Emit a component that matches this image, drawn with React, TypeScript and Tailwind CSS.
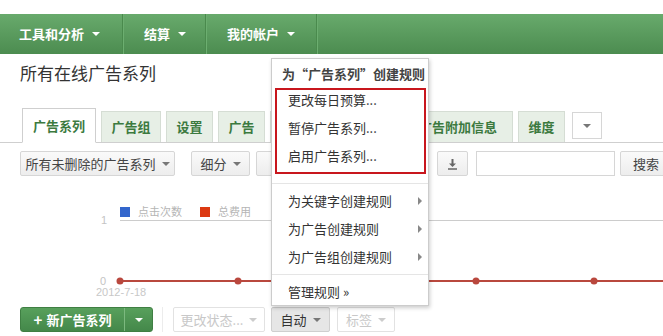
const font = { fontFamily: '"Noto Sans CJK SC", "Liberation Sans", sans-serif' }

const Caret = ({ className = 'text-[#777]' }: { className?: string }) => (
  <span
    className={`inline-block w-0 h-0 border-l-[4px] border-r-[4px] border-t-[4px] border-l-transparent border-r-transparent border-t-current ${className}`}
  />
)

const Arrow = () => (
  <span className="inline-block w-0 h-0 border-t-[4px] border-b-[4px] border-l-[4px] border-t-transparent border-b-transparent border-l-[#888]" />
)

const NavItem = ({ label, w, pl }: { label: string; w: string; pl: string }) => (
  <div
    className={`${w} ${pl} h-full flex items-center gap-[8px] text-white font-bold text-[13px] border-r border-[#4a8a4d] shadow-[1px_0_0_#6cae70]`}
  >
    {label}
    <Caret className="text-white" />
  </div>
)

const Tab = ({ label, w, active = false }: { label: string; w: string; active?: boolean }) =>
  active ? (
    <div
      className={`${w} h-[35px] -mb-px flex items-center justify-center bg-white border border-[#cfcfcf] border-b-white text-[#3c7a3f] font-bold text-[13px]`}
    >
      {label}
    </div>
  ) : (
    <div
      className={`${w} h-[31px] flex items-center justify-center bg-[#e7efe6] border border-[#d5ddd4] border-b-0 text-[#3c7a3f] font-bold text-[13px]`}
    >
      {label}
    </div>
  )

const Btn = ({ children, w, className = '' }: { children: React.ReactNode; w: string; className?: string }) => (
  <div
    className={`${w} shrink-0 h-[25px] flex items-center justify-center gap-[6px] whitespace-nowrap rounded-[2px] border border-[#d6d6d6] bg-linear-to-b from-[#fafafa] to-[#ededed] text-[13px] text-[#444] ${className}`}
  >
    {children}
  </div>
)

const MenuItem = ({ label, arrow = false }: { label: string; arrow?: boolean }) => (
  <div className="h-[28px] flex items-center justify-between pl-[16px] pr-[6px] text-[13px] text-[#333]">
    {label}
    {arrow && <Arrow />}
  </div>
)

export default function App() {
  return (
    <div className="relative w-[663px] h-[336px] overflow-hidden bg-white" style={font}>
      {/* top nav */}
      <div className="mt-[14px] h-[40px] flex bg-linear-to-b from-[#68aa6c] to-[#4c8c50]">
        <NavItem label="工具和分析" w="w-[123px]" pl="pl-[19px]" />
        <NavItem label="结算" w="w-[83px]" pl="pl-[21px]" />
        <NavItem label="我的帐户" w="w-[111px]" pl="pl-[21px]" />
      </div>

      <h1 className="mt-[7px] px-[20px] text-[17px] leading-[24px] font-normal text-[#333]">所有在线广告系列</h1>

      {/* tabs */}
      <div className="mt-[23px] h-[35px] flex items-end gap-[5px] pl-[22px] border-b border-[#cfcfcf]">
        <Tab label="广告系列" w="w-[74px]" active />
        <Tab label="广告组" w="w-[60px]" />
        <Tab label="设置" w="w-[47px]" />
        <Tab label="广告" w="w-[47px]" />
        <Tab label="关键字" w="w-[60px]" />
        <Tab label="受众群体" w="w-[63px]" />
        <Tab label="广告附加信息" w="w-[110px]" />
        <Tab label="维度" w="w-[47px]" />
        <div className="ml-[2px] mb-[3px] w-[30px] h-[27px] flex items-center justify-center bg-white border border-[#d6d6d6]">
          <Caret />
        </div>
      </div>

      {/* toolbar */}
      <div className="mt-[8px] flex items-center pl-[20px]">
        <Btn w="w-[155px]">
          所有未删除的广告系列
          <Caret />
        </Btn>
        <Btn w="w-[59px]" className="ml-[16px]">
          细分
          <Caret />
        </Btn>
        <Btn w="w-[70px]" className="ml-[6px]">
          过滤
          <Caret />
        </Btn>
        <Btn w="w-[60px]" className="ml-[6px]">
          列
          <Caret />
        </Btn>
        <Btn w="w-[31px]" className="ml-[45px]">
          <svg width="11" height="12" viewBox="0 0 11 12">
            <path d="M5.5 1v6" stroke="#666" strokeWidth="2" />
            <path d="M2 5.5l3.5 3.5 3.5-3.5z" fill="#666" />
            <path d="M1 11h9" stroke="#666" strokeWidth="1.5" />
          </svg>
        </Btn>
        <div className="ml-[8px] shrink-0 w-[139px] h-[25px] border border-[#d6d6d6] bg-white" />
        <Btn w="w-[52px]" className="ml-[5px]">
          搜索
        </Btn>
      </div>

      {/* chart */}
      <svg width="663" height="131" className="block" style={{ fontFamily: '"Noto Sans CJK SC", "Liberation Sans", sans-serif' }}>
        <rect x="120" y="31" width="10" height="10" fill="#3366cc" />
        <text x="138" y="40" fontSize="11" fill="#b5b5b5">点击次数</text>
        <rect x="200" y="31" width="10" height="10" fill="#dc3912" />
        <text x="218" y="40" fontSize="11" fill="#b5b5b5">总费用</text>
        <line x1="120" y1="44.5" x2="663" y2="44.5" stroke="#cccccc" />
        <text x="101" y="48" fontSize="11" fill="#c4c4c4" fontFamily="Liberation Sans">1</text>
        <text x="100" y="109" fontSize="11" fill="#c4c4c4" fontFamily="Liberation Sans">0</text>
        <line x1="120" y1="105" x2="663" y2="105" stroke="#b9483e" strokeWidth="2" />
        {[120, 238, 357, 476, 594].map((x) => (
          <circle key={x} cx={x} cy="105" r="3.5" fill="#b9483e" />
        ))}
        <text x="96" y="120" fontSize="11" fill="#c8c8c8" fontFamily="Liberation Sans">2012-7-18</text>
      </svg>

      {/* bottom actions */}
      <div className="flex items-center pl-[20px]">
        <div className="w-[133px] h-[25px] flex rounded-[3px] bg-linear-to-b from-[#58a05c] to-[#44884a] border border-[#3f7f43] text-white text-[13px] font-bold">
          <div className="w-[104px] flex items-center justify-center gap-[4px] border-r border-[#7cb97f]">
            <span className="text-[15px] leading-none">+</span>
            新广告系列
          </div>
          <div className="flex-1 flex items-center justify-center">
            <Caret className="text-white" />
          </div>
        </div>
        <div className="ml-[9px] w-px h-[25px] bg-[#ececec]" />
        <div className="ml-[10px] w-[92px] h-[25px] flex items-center justify-center gap-[6px] rounded-[2px] border border-[#e2e2e2] bg-white text-[13px] text-[#c8c8c8]">
          更改状态...
          <Caret className="text-[#ccc]" />
        </div>
        <div className="ml-[6px] w-[59px] h-[25px] flex items-center justify-center gap-[6px] rounded-[2px] border border-[#cfcfcf] bg-[#e6e6e6] text-[13px] text-[#333]">
          自动
          <Caret />
        </div>
        <div className="ml-[7px] w-[58px] h-[25px] flex items-center justify-center gap-[6px] rounded-[2px] border border-[#e2e2e2] bg-white text-[13px] text-[#c8c8c8]">
          标签
          <Caret className="text-[#ccc]" />
        </div>
      </div>

      {/* rules dropdown */}
      <div className="absolute left-[271px] top-[58px] w-[158px] h-[248px] bg-white border border-[#cccccc] shadow-[1px_2px_4px_rgba(0,0,0,0.2)]">
        <div className="h-[27px] flex items-center pl-[10px] pt-[2px] text-[13px] font-bold text-[#444]">
          为“广告系列”创建规则
        </div>
        <MenuItem label="更改每日预算..." />
        <MenuItem label="暂停广告系列..." />
        <MenuItem label="启用广告系列..." />
        <div className="h-[13px]" />
        <div className="border-t border-[#e5e5e5]" />
        <div className="h-[3px]" />
        <MenuItem label="为关键字创建规则" arrow />
        <MenuItem label="为广告创建规则" arrow />
        <MenuItem label="为广告组创建规则" arrow />
        <div className="h-[3px]" />
        <div className="border-t border-[#e5e5e5]" />
        <div className="h-[3px]" />
        <MenuItem label="管理规则 »" />
        <div className="absolute left-[3px] top-[29px] w-[151px] h-[86px] border-2 border-[#c8161d]" />
      </div>
    </div>
  )
}
